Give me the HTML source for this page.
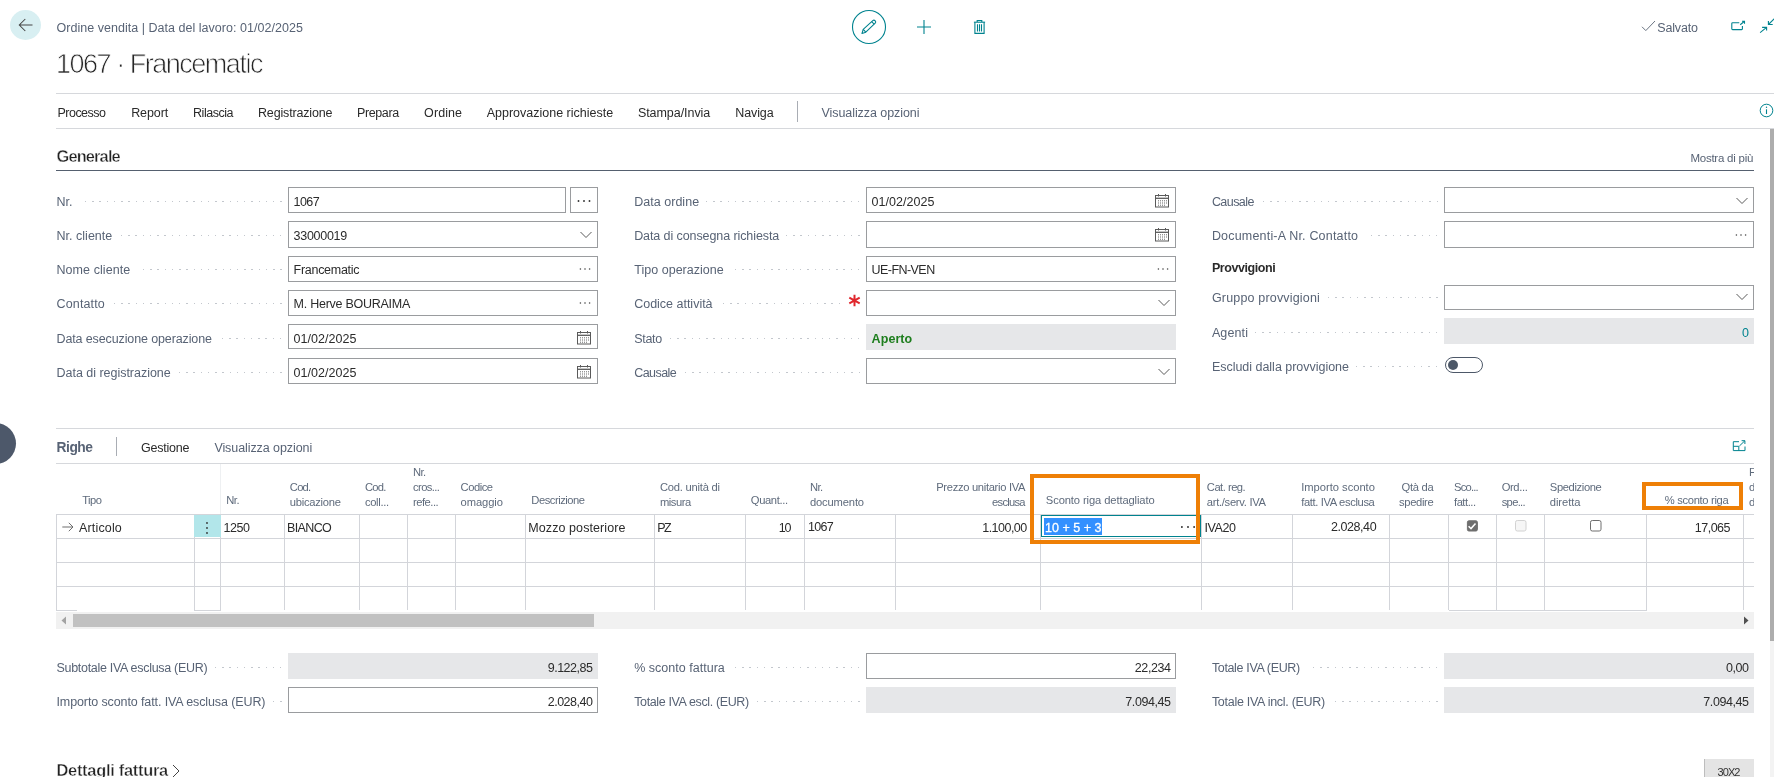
<!DOCTYPE html>
<html lang="it"><head><meta charset="utf-8"><title>1067 · Francematic</title>
<style>
html,body{margin:0;padding:0;background:#fff}
body{width:1774px;height:777px;position:relative;overflow:hidden;font-family:"Liberation Sans",sans-serif;color:#2b2b2b}
body>div,body>svg,.t>span{position:absolute;display:block}
.t{left:0;top:0;width:1774px;height:777px;will-change:transform}
.t>span{white-space:pre;line-height:normal}
</style></head><body>
<div style="left:10px;top:10px;width:31px;height:30px;border-radius:50%;background:#d8eff2"></div>
<svg style="left:17px;top:17px" width="18" height="16" viewBox="0 0 18 16"><path d="M15.5 8H2.5M8.3 2L2.3 8L8.3 14" fill="none" stroke="#444" stroke-width="1.05"/></svg>
<svg style="left:850px;top:8px" width="38" height="38" viewBox="0 0 38 38"><circle cx="19" cy="19" r="16.5" fill="none" stroke="#00838f" stroke-width="1.1"/><g fill="none" stroke="#00838f" stroke-width="1.1" stroke-linejoin="round"><path d="M12 25.5 L13.2 21.3 L22.8 12.6 Q24 11.6 25.2 12.8 Q26.3 14 25.2 15.1 L15.8 24.2 Z"/><path d="M13.2 21.3 L15.8 24.2"/><path d="M21.6 13.7 L24.2 16.2"/></g></svg>
<svg style="left:916px;top:19px" width="16" height="16" viewBox="0 0 16 16"><path d="M8 1V15M1 8H15" stroke="#00838f" stroke-width="1.1" fill="none"/></svg>
<svg style="left:973px;top:19px" width="13" height="16" viewBox="0 0 13 16"><g fill="none" stroke="#00838f" stroke-width="1.1"><path d="M0.9 3.2H12.1"/><path d="M4.2 3V1.5H8.8V3"/><path d="M1.9 3.2V14.4H11.1V3.2"/><path d="M4.5 5.2V12.4M6.5 5.2V12.4M8.5 5.2V12.4"/></g></svg>
<svg style="left:1641px;top:20px" width="15" height="12" viewBox="0 0 15 12"><path d="M1 6.8 L4.8 10.6 L14 1" fill="none" stroke="#6a7482" stroke-width="1"/></svg>
<svg style="left:1731px;top:20px" width="15" height="12" viewBox="0 0 15 12"><g fill="none" stroke="#00838f" stroke-width="1.1"><path d="M8.3 2.8H1.6Q0.8 2.8 0.8 3.6V8.8Q0.8 9.6 1.6 9.6H10.6Q11.4 9.6 11.4 8.8V6"/><path d="M9.2 4.7L13.2 1.5M11 1.3H13.5V3.7"/></g></svg>
<svg style="left:1759px;top:18px" width="15" height="16" viewBox="0 0 15 16"><g fill="none" stroke="#00838f" stroke-width="1.1"><path d="M1.1 14.6L7.6 9.4M3.1 9.4H7.6V12.6"/><path d="M15.5 0.6L9.4 6.5M9.4 3.1V6.5H13.7"/></g></svg>
<div style="left:56px;top:93px;width:1718px;height:1px;background:#d6d8dc"></div>
<div style="left:797px;top:101px;width:1px;height:21px;background:#a9adb4"></div>
<svg style="left:1759px;top:103px" width="15" height="15" viewBox="0 0 15 15"><circle cx="7.5" cy="7.5" r="6.3" fill="none" stroke="#00838f" stroke-width="1"/><path d="M7.5 6.3V11" stroke="#00838f" stroke-width="1.1"/><circle cx="7.5" cy="4.3" r="0.7" fill="#00838f"/></svg>
<div style="left:56px;top:128px;width:1718px;height:1px;background:#d6d8dc"></div>
<div style="left:1770px;top:129px;width:4px;height:512px;background:#adadad"></div>
<div style="left:1770px;top:641px;width:4px;height:136px;background:#f3f3f3"></div>
<div style="left:56px;top:170px;width:1698px;height:1px;background:#55606f"></div>
<div style="left:84.8px;top:200.7px;width:202.4px;height:1.4px;background:repeating-linear-gradient(to right,#c3c7cd 0 1.4px,transparent 1.4px 7.23px)"></div>
<div style="left:288px;top:187px;width:277.5px;height:26px;border:1px solid #9a9c9f;box-sizing:border-box;background:#fff"></div>
<div style="left:570.3px;top:187px;width:27.5px;height:26px;border:1px solid #9a9c9f;box-sizing:border-box;background:#fff"></div>
<svg style="left:576.3px;top:197.9px" width="16" height="6" viewBox="0 0 16 6"><g fill="#333"><circle cx="2.5" cy="3" r="0.95"/><circle cx="8" cy="3" r="0.95"/><circle cx="13.5" cy="3" r="0.95"/></g></svg>
<div style="left:120.9px;top:234.7px;width:166.3px;height:1.4px;background:repeating-linear-gradient(to right,#c3c7cd 0 1.4px,transparent 1.4px 7.23px)"></div>
<div style="left:288px;top:221px;width:310px;height:27px;border:1px solid #9a9c9f;box-sizing:border-box;background:#fff"></div>
<svg style="left:579.6px;top:230.8px" width="12" height="8" viewBox="0 0 12 8"><path d="M0.5 1 L6 6.5 L11.5 1" fill="none" stroke="#5a5a5a" stroke-width="1"/></svg>
<div style="left:142.6px;top:268.7px;width:144.6px;height:1.4px;background:repeating-linear-gradient(to right,#c3c7cd 0 1.4px,transparent 1.4px 7.23px)"></div>
<div style="left:288px;top:256px;width:310px;height:26px;border:1px solid #9a9c9f;box-sizing:border-box;background:#fff"></div>
<svg style="left:577px;top:266px" width="16" height="6" viewBox="0 0 16 6"><g fill="#444"><circle cx="3.4000000000000004" cy="3" r="0.8"/><circle cx="8" cy="3" r="0.8"/><circle cx="12.6" cy="3" r="0.8"/></g></svg>
<div style="left:113.7px;top:302.7px;width:173.5px;height:1.4px;background:repeating-linear-gradient(to right,#c3c7cd 0 1.4px,transparent 1.4px 7.23px)"></div>
<div style="left:288px;top:290px;width:310px;height:26px;border:1px solid #9a9c9f;box-sizing:border-box;background:#fff"></div>
<svg style="left:577px;top:300px" width="16" height="6" viewBox="0 0 16 6"><g fill="#444"><circle cx="3.4000000000000004" cy="3" r="0.8"/><circle cx="8" cy="3" r="0.8"/><circle cx="12.6" cy="3" r="0.8"/></g></svg>
<div style="left:222.1px;top:337.7px;width:65.1px;height:1.4px;background:repeating-linear-gradient(to right,#c3c7cd 0 1.4px,transparent 1.4px 7.23px)"></div>
<div style="left:288px;top:324px;width:310px;height:25px;border:1px solid #9a9c9f;box-sizing:border-box;background:#fff"></div>
<svg style="left:577px;top:331px" width="15" height="14" viewBox="0 0 15 14"><g fill="none" stroke="#5a5a5a" stroke-width="1"><rect x="0.5" y="1.5" width="13" height="11.5"/><path d="M0.5 4.3H13.5" stroke-width="1.3"/><path d="M3.5 0V2.5M10.5 0V2.5"/></g><g fill="#6a6a6a"><rect x="3" y="6.3" width="1" height="1"/><rect x="5" y="6.3" width="1" height="1"/><rect x="7" y="6.3" width="1" height="1"/><rect x="9" y="6.3" width="1" height="1"/><rect x="11" y="6.3" width="1" height="1"/><rect x="3" y="8.5" width="1" height="1"/><rect x="5" y="8.5" width="1" height="1"/><rect x="7" y="8.5" width="1" height="1"/><rect x="9" y="8.5" width="1" height="1"/><rect x="11" y="8.5" width="1" height="1"/><rect x="3" y="10.7" width="1" height="1"/><rect x="5" y="10.7" width="1" height="1"/><rect x="7" y="10.7" width="1" height="1"/><rect x="9" y="10.7" width="1" height="1"/></g></svg>
<div style="left:178.8px;top:371.7px;width:108.5px;height:1.4px;background:repeating-linear-gradient(to right,#c3c7cd 0 1.4px,transparent 1.4px 7.23px)"></div>
<div style="left:288px;top:358px;width:310px;height:26px;border:1px solid #9a9c9f;box-sizing:border-box;background:#fff"></div>
<svg style="left:577px;top:365px" width="15" height="14" viewBox="0 0 15 14"><g fill="none" stroke="#5a5a5a" stroke-width="1"><rect x="0.5" y="1.5" width="13" height="11.5"/><path d="M0.5 4.3H13.5" stroke-width="1.3"/><path d="M3.5 0V2.5M10.5 0V2.5"/></g><g fill="#6a6a6a"><rect x="3" y="6.3" width="1" height="1"/><rect x="5" y="6.3" width="1" height="1"/><rect x="7" y="6.3" width="1" height="1"/><rect x="9" y="6.3" width="1" height="1"/><rect x="11" y="6.3" width="1" height="1"/><rect x="3" y="8.5" width="1" height="1"/><rect x="5" y="8.5" width="1" height="1"/><rect x="7" y="8.5" width="1" height="1"/><rect x="9" y="8.5" width="1" height="1"/><rect x="11" y="8.5" width="1" height="1"/><rect x="3" y="10.7" width="1" height="1"/><rect x="5" y="10.7" width="1" height="1"/><rect x="7" y="10.7" width="1" height="1"/><rect x="9" y="10.7" width="1" height="1"/></g></svg>
<div style="left:706.1px;top:200.7px;width:159.1px;height:1.4px;background:repeating-linear-gradient(to right,#c3c7cd 0 1.4px,transparent 1.4px 7.23px)"></div>
<div style="left:866px;top:187px;width:310px;height:26px;border:1px solid #9a9c9f;box-sizing:border-box;background:#fff"></div>
<svg style="left:1155px;top:194px" width="15" height="14" viewBox="0 0 15 14"><g fill="none" stroke="#5a5a5a" stroke-width="1"><rect x="0.5" y="1.5" width="13" height="11.5"/><path d="M0.5 4.3H13.5" stroke-width="1.3"/><path d="M3.5 0V2.5M10.5 0V2.5"/></g><g fill="#6a6a6a"><rect x="3" y="6.3" width="1" height="1"/><rect x="5" y="6.3" width="1" height="1"/><rect x="7" y="6.3" width="1" height="1"/><rect x="9" y="6.3" width="1" height="1"/><rect x="11" y="6.3" width="1" height="1"/><rect x="3" y="8.5" width="1" height="1"/><rect x="5" y="8.5" width="1" height="1"/><rect x="7" y="8.5" width="1" height="1"/><rect x="9" y="8.5" width="1" height="1"/><rect x="11" y="8.5" width="1" height="1"/><rect x="3" y="10.7" width="1" height="1"/><rect x="5" y="10.7" width="1" height="1"/><rect x="7" y="10.7" width="1" height="1"/><rect x="9" y="10.7" width="1" height="1"/></g></svg>
<div style="left:785.7px;top:234.7px;width:79.5px;height:1.4px;background:repeating-linear-gradient(to right,#c3c7cd 0 1.4px,transparent 1.4px 7.23px)"></div>
<div style="left:866px;top:221px;width:310px;height:27px;border:1px solid #9a9c9f;box-sizing:border-box;background:#fff"></div>
<svg style="left:1155px;top:228px" width="15" height="14" viewBox="0 0 15 14"><g fill="none" stroke="#5a5a5a" stroke-width="1"><rect x="0.5" y="1.5" width="13" height="11.5"/><path d="M0.5 4.3H13.5" stroke-width="1.3"/><path d="M3.5 0V2.5M10.5 0V2.5"/></g><g fill="#6a6a6a"><rect x="3" y="6.3" width="1" height="1"/><rect x="5" y="6.3" width="1" height="1"/><rect x="7" y="6.3" width="1" height="1"/><rect x="9" y="6.3" width="1" height="1"/><rect x="11" y="6.3" width="1" height="1"/><rect x="3" y="8.5" width="1" height="1"/><rect x="5" y="8.5" width="1" height="1"/><rect x="7" y="8.5" width="1" height="1"/><rect x="9" y="8.5" width="1" height="1"/><rect x="11" y="8.5" width="1" height="1"/><rect x="3" y="10.7" width="1" height="1"/><rect x="5" y="10.7" width="1" height="1"/><rect x="7" y="10.7" width="1" height="1"/><rect x="9" y="10.7" width="1" height="1"/></g></svg>
<div style="left:735.1px;top:268.7px;width:130.1px;height:1.4px;background:repeating-linear-gradient(to right,#c3c7cd 0 1.4px,transparent 1.4px 7.23px)"></div>
<div style="left:866px;top:256px;width:310px;height:26px;border:1px solid #9a9c9f;box-sizing:border-box;background:#fff"></div>
<svg style="left:1155px;top:266px" width="16" height="6" viewBox="0 0 16 6"><g fill="#444"><circle cx="3.4000000000000004" cy="3" r="0.8"/><circle cx="8" cy="3" r="0.8"/><circle cx="12.6" cy="3" r="0.8"/></g></svg>
<div style="left:723.1px;top:302.7px;width:122.9px;height:1.4px;background:repeating-linear-gradient(to right,#c3c7cd 0 1.4px,transparent 1.4px 7.23px)"></div>
<div style="left:866px;top:290px;width:310px;height:26px;border:1px solid #9a9c9f;box-sizing:border-box;background:#fff"></div>
<svg style="left:1157.6px;top:298.8px" width="12" height="8" viewBox="0 0 12 8"><path d="M0.5 1 L6 6.5 L11.5 1" fill="none" stroke="#5a5a5a" stroke-width="1"/></svg>
<div style="left:670.0px;top:337.7px;width:195.2px;height:1.4px;background:repeating-linear-gradient(to right,#c3c7cd 0 1.4px,transparent 1.4px 7.23px)"></div>
<div style="left:866px;top:324px;width:310px;height:26px;background:#e6e7e9"></div>
<div style="left:684.5px;top:371.7px;width:180.8px;height:1.4px;background:repeating-linear-gradient(to right,#c3c7cd 0 1.4px,transparent 1.4px 7.23px)"></div>
<div style="left:866px;top:358px;width:310px;height:26px;border:1px solid #9a9c9f;box-sizing:border-box;background:#fff"></div>
<svg style="left:1157.6px;top:367.8px" width="12" height="8" viewBox="0 0 12 8"><path d="M0.5 1 L6 6.5 L11.5 1" fill="none" stroke="#5a5a5a" stroke-width="1"/></svg>
<svg style="left:848px;top:294px" width="13" height="13" viewBox="0 0 13 13"><path d="M6.5 0.8V12.2M1.3 3.6L11.7 9.4M11.7 3.6L1.3 9.4" stroke="#e0262c" stroke-width="2" fill="none"/></svg>
<div style="left:1262.5px;top:200.7px;width:180.8px;height:1.4px;background:repeating-linear-gradient(to right,#c3c7cd 0 1.4px,transparent 1.4px 7.23px)"></div>
<div style="left:1444px;top:187px;width:310px;height:26px;border:1px solid #9a9c9f;box-sizing:border-box;background:#fff"></div>
<svg style="left:1735.6px;top:196.8px" width="12" height="8" viewBox="0 0 12 8"><path d="M0.5 1 L6 6.5 L11.5 1" fill="none" stroke="#5a5a5a" stroke-width="1"/></svg>
<div style="left:1370.9px;top:234.7px;width:72.3px;height:1.4px;background:repeating-linear-gradient(to right,#c3c7cd 0 1.4px,transparent 1.4px 7.23px)"></div>
<div style="left:1444px;top:221px;width:310px;height:27px;border:1px solid #9a9c9f;box-sizing:border-box;background:#fff"></div>
<svg style="left:1733px;top:232px" width="16" height="6" viewBox="0 0 16 6"><g fill="#444"><circle cx="3.4000000000000004" cy="3" r="0.8"/><circle cx="8" cy="3" r="0.8"/><circle cx="12.6" cy="3" r="0.8"/></g></svg>
<div style="left:1327.5px;top:296.7px;width:115.7px;height:1.4px;background:repeating-linear-gradient(to right,#c3c7cd 0 1.4px,transparent 1.4px 7.23px)"></div>
<div style="left:1444px;top:284.5px;width:310px;height:25px;border:1px solid #9a9c9f;box-sizing:border-box;background:#fff"></div>
<svg style="left:1735.6px;top:292.8px" width="12" height="8" viewBox="0 0 12 8"><path d="M0.5 1 L6 6.5 L11.5 1" fill="none" stroke="#5a5a5a" stroke-width="1"/></svg>
<div style="left:1255.2px;top:331.7px;width:188.0px;height:1.4px;background:repeating-linear-gradient(to right,#c3c7cd 0 1.4px,transparent 1.4px 7.23px)"></div>
<div style="left:1444px;top:318px;width:310px;height:26px;background:#e6e7e9"></div>
<div style="left:1356.4px;top:365.7px;width:86.8px;height:1.4px;background:repeating-linear-gradient(to right,#c3c7cd 0 1.4px,transparent 1.4px 7.23px)"></div>
<div style="left:1444.5px;top:357px;width:38px;height:16px;border:1px solid #4d5868;border-radius:9px;box-sizing:border-box;background:#fff"></div>
<div style="left:1448px;top:360px;width:10px;height:10px;border-radius:50%;background:#4d5868"></div>
<div style="left:-25px;top:423px;width:41px;height:41px;border-radius:50%;background:#4d586a"></div>
<div style="left:56px;top:428px;width:1698px;height:1px;background:#d6d8dc"></div>
<div style="left:116px;top:437px;width:1px;height:19px;background:#a9adb4"></div>
<svg style="left:1732px;top:440px" width="14" height="12" viewBox="0 0 14 12"><g fill="none" stroke="#00838f" stroke-width="1"><path d="M7 1.7H1.3V10.6H13V6.5"/><path d="M1.3 6.3H6.8V10.6"/><path d="M7.4 6L12.8 0.8M9.6 0.7H12.9V4"/></g></svg>
<div style="left:56px;top:463px;width:1698px;height:1px;background:#d6d8dc"></div>
<div style="left:56px;top:514px;width:1698px;height:1px;background:#d3d5da"></div>
<div style="left:56px;top:538px;width:1698px;height:1px;background:#d3d5da"></div>
<div style="left:56px;top:562px;width:1698px;height:1px;background:#d3d5da"></div>
<div style="left:56px;top:586px;width:1698px;height:1px;background:#d3d5da"></div>
<div style="left:56px;top:514px;width:1px;height:96px;background:#d3d5da"></div>
<div style="left:194px;top:514px;width:1px;height:96px;background:#d3d5da"></div>
<div style="left:220px;top:514px;width:1px;height:96px;background:#d3d5da"></div>
<div style="left:284px;top:515px;width:1px;height:95px;background:#d3d5da"></div>
<div style="left:359px;top:515px;width:1px;height:95px;background:#d3d5da"></div>
<div style="left:407px;top:515px;width:1px;height:95px;background:#d3d5da"></div>
<div style="left:455px;top:515px;width:1px;height:95px;background:#d3d5da"></div>
<div style="left:525px;top:515px;width:1px;height:95px;background:#d3d5da"></div>
<div style="left:654px;top:515px;width:1px;height:95px;background:#d3d5da"></div>
<div style="left:745px;top:515px;width:1px;height:95px;background:#d3d5da"></div>
<div style="left:804px;top:515px;width:1px;height:95px;background:#d3d5da"></div>
<div style="left:895px;top:515px;width:1px;height:95px;background:#d3d5da"></div>
<div style="left:1040px;top:515px;width:1px;height:95px;background:#d3d5da"></div>
<div style="left:1201px;top:515px;width:1px;height:95px;background:#d3d5da"></div>
<div style="left:1292px;top:515px;width:1px;height:95px;background:#d3d5da"></div>
<div style="left:1389px;top:515px;width:1px;height:95px;background:#d3d5da"></div>
<div style="left:1448px;top:515px;width:1px;height:95px;background:#d3d5da"></div>
<div style="left:1496px;top:515px;width:1px;height:95px;background:#d3d5da"></div>
<div style="left:1544px;top:515px;width:1px;height:95px;background:#d3d5da"></div>
<div style="left:1646px;top:515px;width:1px;height:95px;background:#d3d5da"></div>
<div style="left:1743px;top:515px;width:1px;height:95px;background:#d3d5da"></div>
<div style="left:220px;top:464px;width:1px;height:50px;background:#eef0f2"></div>
<div style="left:56px;top:610px;width:21px;height:1px;background:#d3d5da"></div>
<div style="left:194px;top:610px;width:27px;height:1px;background:#d3d5da"></div>
<div style="left:1449px;top:610px;width:198px;height:1px;background:#d3d5da"></div>
<div style="left:194.3px;top:515px;width:26.3px;height:21.7px;background:#b2e6ea"></div>
<svg style="left:205.4px;top:520.7px" width="4" height="14" viewBox="0 0 4 14"><g fill="#333"><circle cx="2" cy="2" r="0.9"/><circle cx="2" cy="7" r="0.9"/><circle cx="2" cy="12" r="0.9"/></g></svg>
<svg style="left:62px;top:521.6px" width="13" height="10" viewBox="0 0 13 10"><path d="M0.3 5H10.8M6.8 0.8L11 5L6.8 9.2" fill="none" stroke="#666" stroke-width="0.95"/></svg>
<div style="left:1041px;top:515px;width:160px;height:22px;border:1px solid #00838f;border-bottom:1.5px solid #00838f;box-sizing:border-box;background:#fff"></div>
<div style="left:1044px;top:518px;width:58px;height:17px;background:#3390ff"></div>
<svg style="left:1179.5px;top:523.8px" width="16" height="6" viewBox="0 0 16 6"><g fill="#222"><circle cx="1.9000000000000004" cy="3" r="0.9"/><circle cx="8" cy="3" r="0.9"/><circle cx="14.1" cy="3" r="0.9"/></g></svg>
<svg style="left:1466px;top:520px" width="12" height="12" viewBox="0 0 12 12"><rect x="1.4" y="0.8" width="10" height="10.2" rx="1.5" fill="#6e6e6e" stroke="#6e6e6e"/><path d="M2.6 6.2L5 8.6L9.5 3.4" fill="none" stroke="#fff" stroke-width="1.5"/></svg>
<svg style="left:1515px;top:520px" width="12" height="12" viewBox="0 0 12 12"><rect x="0.5" y="0.5" width="10.5" height="10.5" rx="1.8" fill="#f6f6f6" stroke="#d2d2d2"/></svg>
<svg style="left:1590px;top:520px" width="12" height="12" viewBox="0 0 12 12"><rect x="0.5" y="0.5" width="10.5" height="10.5" rx="1.8" fill="#fff" stroke="#6e6e6e"/></svg>
<div style="left:1030px;top:474px;width:170px;height:70px;border:4px solid #ee7f06;box-sizing:border-box"></div>
<div style="left:1642px;top:482px;width:101px;height:28px;border:4px solid #ee7f06;box-sizing:border-box"></div>
<div style="left:56px;top:612px;width:1698px;height:17px;background:#f1f1f1"></div>
<div style="left:73px;top:614px;width:521px;height:13px;background:#c1c1c1"></div>
<svg style="left:60px;top:616px" width="8" height="9" viewBox="0 0 8 9"><path d="M6 0.5V8.5L1.5 4.5Z" fill="#a3a3a3"/></svg>
<svg style="left:1742px;top:616px" width="8" height="9" viewBox="0 0 8 9"><path d="M2 0.5V8.5L6.5 4.5Z" fill="#505050"/></svg>
<div style="left:214.9px;top:666.7px;width:72.3px;height:1.4px;background:repeating-linear-gradient(to right,#c3c7cd 0 1.4px,transparent 1.4px 7.23px)"></div>
<div style="left:288px;top:653px;width:310px;height:26px;background:#e6e7e9"></div>
<div style="left:272.7px;top:700.7px;width:14.5px;height:1.4px;background:repeating-linear-gradient(to right,#c3c7cd 0 1.4px,transparent 1.4px 7.23px)"></div>
<div style="left:288px;top:687px;width:310px;height:26px;border:1px solid #9a9c9f;box-sizing:border-box;background:#fff"></div>
<div style="left:735.1px;top:666.7px;width:130.1px;height:1.4px;background:repeating-linear-gradient(to right,#c3c7cd 0 1.4px,transparent 1.4px 7.23px)"></div>
<div style="left:866px;top:653px;width:310px;height:26px;border:1px solid #9a9c9f;box-sizing:border-box;background:#fff"></div>
<div style="left:756.8px;top:700.7px;width:108.5px;height:1.4px;background:repeating-linear-gradient(to right,#c3c7cd 0 1.4px,transparent 1.4px 7.23px)"></div>
<div style="left:866px;top:687px;width:310px;height:26px;background:#e6e7e9"></div>
<div style="left:1313.1px;top:666.7px;width:130.1px;height:1.4px;background:repeating-linear-gradient(to right,#c3c7cd 0 1.4px,transparent 1.4px 7.23px)"></div>
<div style="left:1444px;top:653px;width:310px;height:26px;background:#e6e7e9"></div>
<div style="left:1334.8px;top:700.7px;width:108.5px;height:1.4px;background:repeating-linear-gradient(to right,#c3c7cd 0 1.4px,transparent 1.4px 7.23px)"></div>
<div style="left:1444px;top:687px;width:310px;height:26px;background:#e6e7e9"></div>
<svg style="left:172px;top:764px" width="8" height="14" viewBox="0 0 8 14"><path d="M1 1L7 7L1 13" fill="none" stroke="#444" stroke-width="1"/></svg>
<div style="left:1704px;top:759px;width:50px;height:18px;background:#e4e4e4;border-left:1px solid #bdbdbd;box-sizing:border-box"></div>
<div class="t">
<span style="top:21px;font-size:12.5px;left:56.5px;letter-spacing:0.03px;color:#586375;">Ordine vendita | Data del lavoro: 01/02/2025</span>
<span style="top:49px;font-size:27px;left:56px;letter-spacing:-1.48px;color:#262626;-webkit-text-stroke:0.75px #fff;">1067 · Francematic</span>
<span style="top:21px;font-size:12.5px;left:1657.3px;letter-spacing:-0.18px;color:#586375;">Salvato</span>
<span style="top:106px;font-size:12.5px;left:57.5px;letter-spacing:-0.52px;color:#2a2a2a;">Processo</span>
<span style="top:106px;font-size:12.5px;left:131.2px;letter-spacing:-0.11px;color:#2a2a2a;">Report</span>
<span style="top:106px;font-size:12.5px;left:193.1px;letter-spacing:-0.50px;color:#2a2a2a;">Rilascia</span>
<span style="top:106px;font-size:12.5px;left:258px;letter-spacing:-0.16px;color:#2a2a2a;">Registrazione</span>
<span style="top:106px;font-size:12.5px;left:357.1px;letter-spacing:-0.41px;color:#2a2a2a;">Prepara</span>
<span style="top:106px;font-size:12.5px;left:424.1px;letter-spacing:0.09px;color:#2a2a2a;">Ordine</span>
<span style="top:106px;font-size:12.5px;left:486.7px;color:#2a2a2a;">Approvazione richieste</span>
<span style="top:106px;font-size:12.5px;left:637.9px;letter-spacing:-0.05px;color:#2a2a2a;">Stampa/Invia</span>
<span style="top:106px;font-size:12.5px;left:735.3px;letter-spacing:-0.12px;color:#2a2a2a;">Naviga</span>
<span style="top:106px;font-size:12.5px;left:821.5px;letter-spacing:-0.07px;color:#586375;">Visualizza opzioni</span>
<span style="top:147px;font-size:16.4px;left:56.5px;letter-spacing:-0.85px;font-weight:700;color:#222;-webkit-text-stroke:0.4px #fff;">Generale</span>
<span style="top:152px;font-size:11.5px;right:20.9px;letter-spacing:-0.24px;color:#586375;">Mostra di più</span>
<span style="top:195px;font-size:12.5px;left:56.5px;letter-spacing:-0.04px;color:#586375;">Nr.</span>
<span style="top:195px;font-size:12.5px;left:293.6px;letter-spacing:-0.60px;">1067</span>
<span style="top:229px;font-size:12.5px;left:56.5px;letter-spacing:0.02px;color:#586375;">Nr. cliente</span>
<span style="top:229px;font-size:12.5px;left:293.6px;letter-spacing:-0.29px;">33000019</span>
<span style="top:263px;font-size:12.5px;left:56.5px;letter-spacing:0.07px;color:#586375;">Nome cliente</span>
<span style="top:263px;font-size:12.5px;left:293.6px;letter-spacing:-0.29px;">Francematic</span>
<span style="top:297px;font-size:12.5px;left:56.5px;letter-spacing:0.15px;color:#586375;">Contatto</span>
<span style="top:297px;font-size:12.5px;left:293.6px;letter-spacing:-0.26px;">M. Herve BOURAIMA</span>
<span style="top:332px;font-size:12.5px;left:56.5px;letter-spacing:-0.12px;color:#586375;">Data esecuzione operazione</span>
<span style="top:332px;font-size:12.5px;left:293.6px;letter-spacing:0.04px;">01/02/2025</span>
<span style="top:366px;font-size:12.5px;left:56.5px;letter-spacing:-0.02px;color:#586375;">Data di registrazione</span>
<span style="top:366px;font-size:12.5px;left:293.6px;letter-spacing:0.04px;">01/02/2025</span>
<span style="top:195px;font-size:12.5px;left:634.2px;letter-spacing:0.03px;color:#586375;">Data ordine</span>
<span style="top:195px;font-size:12.5px;left:871.6px;letter-spacing:0.04px;">01/02/2025</span>
<span style="top:229px;font-size:12.5px;left:634.2px;letter-spacing:-0.09px;color:#586375;">Data di consegna richiesta</span>
<span style="top:263px;font-size:12.5px;left:634.2px;letter-spacing:0.03px;color:#586375;">Tipo operazione</span>
<span style="top:263px;font-size:12.5px;left:871.6px;letter-spacing:-0.56px;">UE-FN-VEN</span>
<span style="top:297px;font-size:12.5px;left:634.2px;letter-spacing:-0.01px;color:#586375;">Codice attività</span>
<span style="top:332px;font-size:12.5px;left:634.2px;letter-spacing:-0.30px;color:#586375;">Stato</span>
<span style="top:332px;font-size:12.5px;left:871.6px;letter-spacing:0.06px;font-weight:700;color:#1e7e1e;">Aperto</span>
<span style="top:366px;font-size:12.5px;left:634.2px;letter-spacing:-0.55px;color:#586375;">Causale</span>
<span style="top:195px;font-size:12.5px;left:1211.9px;letter-spacing:-0.55px;color:#586375;">Causale</span>
<span style="top:229px;font-size:12.5px;left:1211.9px;letter-spacing:0.19px;color:#586375;">Documenti-A Nr. Contatto</span>
<span style="top:261px;font-size:12.5px;left:1211.9px;letter-spacing:-0.42px;font-weight:700;">Provvigioni</span>
<span style="top:291px;font-size:12.5px;left:1211.9px;letter-spacing:0.18px;color:#586375;">Gruppo provvigioni</span>
<span style="top:326px;font-size:12.5px;left:1211.9px;letter-spacing:0.13px;color:#586375;">Agenti</span>
<span style="top:326px;font-size:12.5px;right:25.0px;color:#00838f;">0</span>
<span style="top:360px;font-size:12.5px;left:1211.9px;letter-spacing:-0.02px;color:#586375;">Escludi dalla provvigione</span>
<span style="top:440px;font-size:13.8px;left:56.5px;letter-spacing:-0.46px;font-weight:700;color:#586375;">Righe</span>
<span style="top:441px;font-size:12.5px;left:141px;letter-spacing:-0.23px;color:#2a2a2a;">Gestione</span>
<span style="top:441px;font-size:12.5px;left:214.4px;letter-spacing:-0.08px;color:#586375;">Visualizza opzioni</span>
<span style="top:494px;font-size:11.2px;left:82.2px;letter-spacing:-0.49px;color:#5f6b7c;">Tipo</span>
<span style="top:494px;font-size:11.2px;left:226.3px;letter-spacing:-0.55px;color:#5f6b7c;">Nr.</span>
<span style="top:481px;font-size:11.2px;left:289.8px;letter-spacing:-0.75px;color:#5f6b7c;">Cod.</span>
<span style="top:496px;font-size:11.2px;left:289.8px;letter-spacing:-0.27px;color:#5f6b7c;">ubicazione</span>
<span style="top:481px;font-size:11.2px;left:365px;letter-spacing:-0.75px;color:#5f6b7c;">Cod.</span>
<span style="top:496px;font-size:11.2px;left:365px;letter-spacing:-0.35px;color:#5f6b7c;">coll...</span>
<span style="top:466px;font-size:11.2px;left:413px;letter-spacing:-0.55px;color:#5f6b7c;">Nr.</span>
<span style="top:481px;font-size:11.2px;left:413px;letter-spacing:-0.58px;color:#5f6b7c;">cros...</span>
<span style="top:496px;font-size:11.2px;left:413px;letter-spacing:-0.48px;color:#5f6b7c;">refe...</span>
<span style="top:481px;font-size:11.2px;left:460.6px;letter-spacing:-0.47px;color:#5f6b7c;">Codice</span>
<span style="top:496px;font-size:11.2px;left:460.6px;letter-spacing:-0.10px;color:#5f6b7c;">omaggio</span>
<span style="top:494px;font-size:11.2px;left:531.3px;letter-spacing:-0.47px;color:#5f6b7c;">Descrizione</span>
<span style="top:481px;font-size:11.2px;left:659.9px;letter-spacing:-0.22px;color:#5f6b7c;">Cod. unità di</span>
<span style="top:496px;font-size:11.2px;left:659.9px;letter-spacing:-0.44px;color:#5f6b7c;">misura</span>
<span style="top:494px;font-size:11.2px;left:750.8px;letter-spacing:-0.37px;color:#5f6b7c;">Quant...</span>
<span style="top:481px;font-size:11.2px;left:810px;letter-spacing:-0.55px;color:#5f6b7c;">Nr.</span>
<span style="top:496px;font-size:11.2px;left:810px;letter-spacing:-0.16px;color:#5f6b7c;">documento</span>
<span style="top:481px;font-size:11.2px;right:748.8px;letter-spacing:-0.31px;color:#5f6b7c;">Prezzo unitario IVA</span>
<span style="top:496px;font-size:11.2px;right:749.2px;letter-spacing:-0.74px;color:#5f6b7c;">esclusa</span>
<span style="top:494px;font-size:11.2px;left:1045.8px;letter-spacing:-0.11px;color:#5f6b7c;">Sconto riga dettagliato</span>
<span style="top:481px;font-size:11.2px;left:1206.8px;letter-spacing:-0.50px;color:#5f6b7c;">Cat. reg.</span>
<span style="top:496px;font-size:11.2px;left:1206.8px;letter-spacing:-0.29px;color:#5f6b7c;">art./serv. IVA</span>
<span style="top:481px;font-size:11.2px;right:399.1px;letter-spacing:-0.02px;color:#5f6b7c;">Importo sconto</span>
<span style="top:496px;font-size:11.2px;right:399.5px;letter-spacing:-0.36px;color:#5f6b7c;">fatt. IVA esclusa</span>
<span style="top:481px;font-size:11.2px;right:340.6px;letter-spacing:-0.30px;color:#5f6b7c;">Qtà da</span>
<span style="top:496px;font-size:11.2px;right:340.6px;letter-spacing:-0.32px;color:#5f6b7c;">spedire</span>
<span style="top:481px;font-size:11.2px;left:1454px;letter-spacing:-0.78px;color:#5f6b7c;">Sco...</span>
<span style="top:496px;font-size:11.2px;left:1454px;letter-spacing:-0.48px;color:#5f6b7c;">fatt...</span>
<span style="top:481px;font-size:11.2px;left:1501.7px;letter-spacing:-0.38px;color:#5f6b7c;">Ord...</span>
<span style="top:496px;font-size:11.2px;left:1501.7px;letter-spacing:-0.68px;color:#5f6b7c;">spe...</span>
<span style="top:481px;font-size:11.2px;left:1549.8px;letter-spacing:-0.37px;color:#5f6b7c;">Spedizione</span>
<span style="top:496px;font-size:11.2px;left:1549.8px;letter-spacing:-0.07px;color:#5f6b7c;">diretta</span>
<span style="top:494px;font-size:11.2px;right:45.6px;letter-spacing:-0.32px;color:#5f6b7c;">% sconto riga</span>
<span style="top:466px;font-size:11.2px;left:1749px;color:#5f6b7c;width:5px;overflow:hidden;">F</span>
<span style="top:481px;font-size:11.2px;left:1749px;color:#5f6b7c;width:5px;overflow:hidden;">d</span>
<span style="top:496px;font-size:11.2px;left:1749px;color:#5f6b7c;width:5px;overflow:hidden;">d</span>
<span style="top:521px;font-size:12.5px;left:79.1px;letter-spacing:0.14px;">Articolo</span>
<span style="top:521px;font-size:12.5px;left:223.6px;letter-spacing:-0.47px;">1250</span>
<span style="top:521px;font-size:12.5px;left:287.1px;letter-spacing:-0.65px;">BIANCO</span>
<span style="top:521px;font-size:12.5px;left:528.3px;letter-spacing:0.08px;">Mozzo posteriore</span>
<span style="top:521px;font-size:12.5px;left:657.2px;letter-spacing:-1.60px;">PZ</span>
<span style="top:521px;font-size:12.5px;right:983.7px;letter-spacing:-1.11px;">10</span>
<span style="top:520px;font-size:12.5px;left:808px;letter-spacing:-0.70px;">1067</span>
<span style="top:521px;font-size:12.5px;right:747.3px;letter-spacing:-0.52px;">1.100,00</span>
<span style="top:521px;font-size:12.5px;left:1204.4px;letter-spacing:-0.41px;">IVA20</span>
<span style="top:520px;font-size:12.5px;right:397.8px;letter-spacing:-0.42px;">2.028,40</span>
<span style="top:521px;font-size:12.5px;right:44.1px;letter-spacing:-0.53px;">17,065</span>
<span style="top:521px;font-size:12.5px;left:1045px;letter-spacing:0.01px;color:#fff;-webkit-text-stroke:0.3px #fff;">10 + 5 + 3</span>
<span style="top:661px;font-size:12.5px;left:56.5px;letter-spacing:-0.30px;color:#586375;">Subtotale IVA esclusa (EUR)</span>
<span style="top:661px;font-size:12.5px;right:1181.5px;letter-spacing:-0.48px;">9.122,85</span>
<span style="top:695px;font-size:12.5px;left:56.5px;letter-spacing:-0.11px;color:#586375;">Importo sconto fatt. IVA esclusa (EUR)</span>
<span style="top:695px;font-size:12.5px;right:1181.5px;letter-spacing:-0.48px;">2.028,40</span>
<span style="top:661px;font-size:12.5px;left:634.2px;letter-spacing:0.02px;color:#586375;">% sconto fattura</span>
<span style="top:661px;font-size:12.5px;right:603.4px;letter-spacing:-0.41px;">22,234</span>
<span style="top:695px;font-size:12.5px;left:634.2px;letter-spacing:-0.37px;color:#586375;">Totale IVA escl. (EUR)</span>
<span style="top:695px;font-size:12.5px;right:603.4px;letter-spacing:-0.42px;">7.094,45</span>
<span style="top:661px;font-size:12.5px;left:1211.9px;letter-spacing:-0.35px;color:#586375;">Totale IVA (EUR)</span>
<span style="top:661px;font-size:12.5px;right:25.4px;letter-spacing:-0.45px;">0,00</span>
<span style="top:695px;font-size:12.5px;left:1211.9px;letter-spacing:-0.28px;color:#586375;">Totale IVA incl. (EUR)</span>
<span style="top:695px;font-size:12.5px;right:25.4px;letter-spacing:-0.42px;">7.094,45</span>
<span style="top:761px;font-size:16.4px;left:56.5px;letter-spacing:-0.27px;font-weight:700;color:#222;-webkit-text-stroke:0.4px #fff;">Dettagli fattura</span>
<span style="top:766px;font-size:11px;left:1717.5px;letter-spacing:-0.90px;color:#333;">30X2</span>
</div>
</body></html>
